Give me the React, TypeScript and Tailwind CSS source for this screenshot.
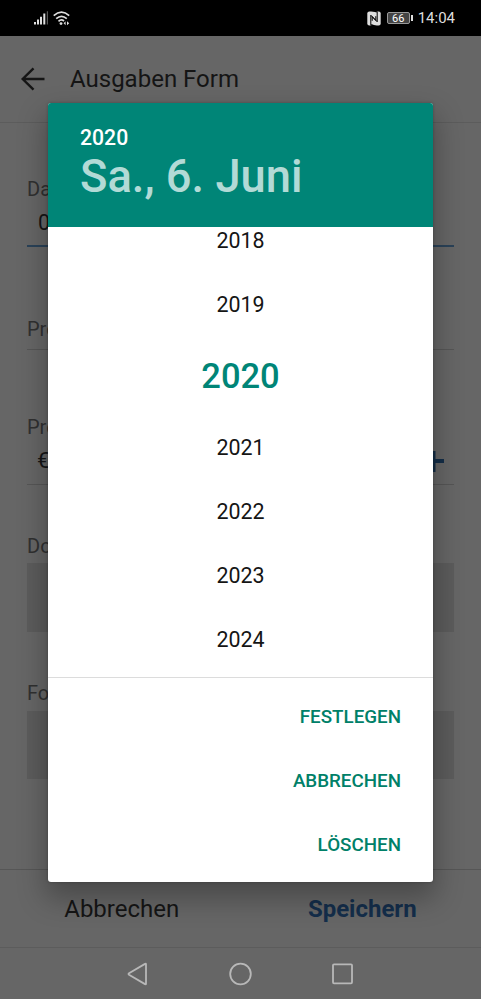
import type { ReactNode } from "react";

function StatusBar() {
  return (
    <div className="flex h-9 shrink-0 items-center justify-between bg-black pl-[33px] pr-[26px] text-[#dedede]">
      <div className="flex items-center gap-1">
        <svg width="16" height="14" viewBox="0 0 16 14" fill="currentColor">
          <path d="M1 11h2v2.6H1zM4 8.6h2v5H4zM7 5.8h2v7.8H7zM10.3 2.6h2v11h-2z" />
          <path d="M13.8.2H15v13.4h-1.2z" opacity=".4" />
        </svg>
        <svg width="17" height="15" viewBox="0 0 17 15" fill="none" stroke="currentColor" strokeWidth="1.7">
          <path d="M.7 4.6Q8.5-2.2 16.2 4.6M3.2 7.7Q8.5 3 13.8 7.7M5.5 10.3Q8.3 7.6 11 10" />
          <circle cx="8" cy="12.6" r="1.4" fill="currentColor" stroke="none" />
          <path d="M12.6 10.3v4L10.6 12.3zM14 10.3v4L16.2 12.3z" fill="currentColor" stroke="none" />
        </svg>
      </div>
      <div className="flex items-center">
        <svg width="14" height="15" viewBox="0 0 14 15">
          <rect x=".3" y=".5" width="13.4" height="14" rx="2" fill="#dedede" />
          <path d="M3.8 14.5V4.2l5 5.2V5.2M10.2.5v10.3l-5-5.2v4.2" fill="none" stroke="#000" strokeWidth="1" />
          <path d="M4.2 0h5.6v1.6L7 .8zM4.2 15h5.6l-5.6-2z" fill="#000" />
        </svg>
        <div className="ml-[6px] flex h-3 w-[23px] items-center justify-center rounded-[2px] border border-[#999] bg-[#444] text-[11px] leading-none text-white">66</div>
        <div className="ml-px h-[6px] w-[2px] bg-[#ddd]" />
        <div className="ml-[5px] text-[15px] leading-none">14:04</div>
      </div>
    </div>
  );
}

function Field({ label, className, children }: { label: string; className: string; children?: ReactNode }) {
  return (
    <div className={`mx-[27px] flex shrink-0 flex-col border-[#565656] ${className}`}>
      <div className="text-[20px] leading-6 text-[#303030]">{label}</div>
      {children}
    </div>
  );
}

function YearRow({ year }: { year: number }) {
  return <div className="flex h-16 shrink-0 items-center justify-center pt-[2px] text-[21.4px] text-[#151515]">{year}</div>;
}

function DatePicker() {
  return (
    <div className="absolute left-12 top-[103px] flex h-[779px] w-[385px] flex-col overflow-hidden rounded-[3px] bg-white shadow-[0_14px_28px_3px_rgba(0,0,0,0.28),0_0_3px_rgba(0,0,0,0.25)]">
      <div className="h-[124px] shrink-0 bg-[#008577] pl-8 pt-[22px] font-medium">
        <div className="text-[21.2px] leading-[26px] text-white">2020</div>
        <div className="text-[45.3px] leading-[52px] text-[#b2dad6]">Sa., 6. Juni</div>
      </div>
      <div className="flex h-[450px] shrink-0 flex-col overflow-hidden">
        <div className="-mt-[19px] flex shrink-0 flex-col">
          <YearRow year={2018} />
          <YearRow year={2019} />
          <div className="flex h-[79px] items-center justify-center pt-[2px] text-[34.5px] font-medium text-[#008577]">2020</div>
          <YearRow year={2021} />
          <YearRow year={2022} />
          <YearRow year={2023} />
          <YearRow year={2024} />
        </div>
      </div>
      <div className="flex grow flex-col border-t border-[#dcdcdc] pr-8 pt-[7px] text-right text-[18.8px] font-medium text-[#008068]">
        <button className="h-16 text-right">FESTLEGEN</button>
        <button className="h-16 text-right">ABBRECHEN</button>
        <button className="h-16 text-right">LÖSCHEN</button>
      </div>
    </div>
  );
}

export default function App() {
  return (
    <div className="relative flex h-[999px] w-[481px] flex-col overflow-hidden bg-[#666] font-['Roboto',sans-serif]">
      <StatusBar />
      <header className="flex h-[87px] shrink-0 items-center border-b border-[#5c5c5c] pl-[20px]">
        <svg width="25" height="24" viewBox="0 0 25 24" fill="none" stroke="#151515" strokeWidth="2.4">
          <path d="M24.5 12H2.5M13.5 1.3 2.7 12l10.8 10.7" />
        </svg>
        <h1 className="ml-[25px] text-[24px] text-[#151515]">Ausgaben Form</h1>
      </header>
      <main className="flex grow flex-col">
        <Field label="Dat" className="mt-[54px] h-[70px] border-b-2 border-[#2a4258]!">
          <div className="pl-[11px] pt-[10px] text-[21.4px] leading-6 text-[#151515]">06</div>
        </Field>
        <Field label="Pre" className="mt-[70px] h-[33px] border-b" />
        <Field label="Pre" className="mt-[65px] h-[70px] border-b">
          <div className="flex items-center justify-between pl-[10px] pr-[10px] pt-[10px] text-[21.4px] leading-6 text-[#151515]">
            <span>€</span>
            <svg width="21" height="21" viewBox="0 0 21 21" fill="none" stroke="#142e48" strokeWidth="4">
              <path d="M10.5 0v21M0 10h21" />
            </svg>
          </div>
        </Field>
        <Field label="Do" className="mt-[49px]">
          <div className="mt-[5px] h-[69px] bg-[#5c5c5c]" />
        </Field>
        <Field label="Fot" className="mt-[49px]">
          <div className="mt-[6px] h-[68px] bg-[#5c5c5c]" />
        </Field>
      </main>
      <footer className="grid h-[78px] shrink-0 grid-cols-2 border-t border-[#565656] pt-px text-center text-[24px] leading-[77px]">
        <div className="pl-[3px] text-[#151515]">Abbrechen</div>
        <div className="pl-[3px] font-bold text-[#142e4b]">Speichern</div>
      </footer>
      <nav className="flex h-[52px] shrink-0 items-center justify-center gap-[78px] border-t border-[#5c5c5c] pr-[2px]">
        <svg width="24" height="24" viewBox="0 0 24 24" fill="none" stroke="#b8b8b8" strokeWidth="1.8" strokeLinejoin="round">
          <path d="M20 2.2v19.6q0 1-1 .3L3 12.8q-1-.8 0-1.6L19 1.9q1-.7 1 .3Z" />
        </svg>
        <svg width="24" height="24" viewBox="0 0 24 24" fill="none" stroke="#b8b8b8" strokeWidth="1.8">
          <circle cx="12.5" cy="12" r="10.3" />
        </svg>
        <svg width="24" height="24" viewBox="0 0 24 24" fill="none" stroke="#b8b8b8" strokeWidth="1.8">
          <rect x="3" y="2.3" width="19" height="19" rx="1" />
        </svg>
      </nav>
      <DatePicker />
    </div>
  );
}
